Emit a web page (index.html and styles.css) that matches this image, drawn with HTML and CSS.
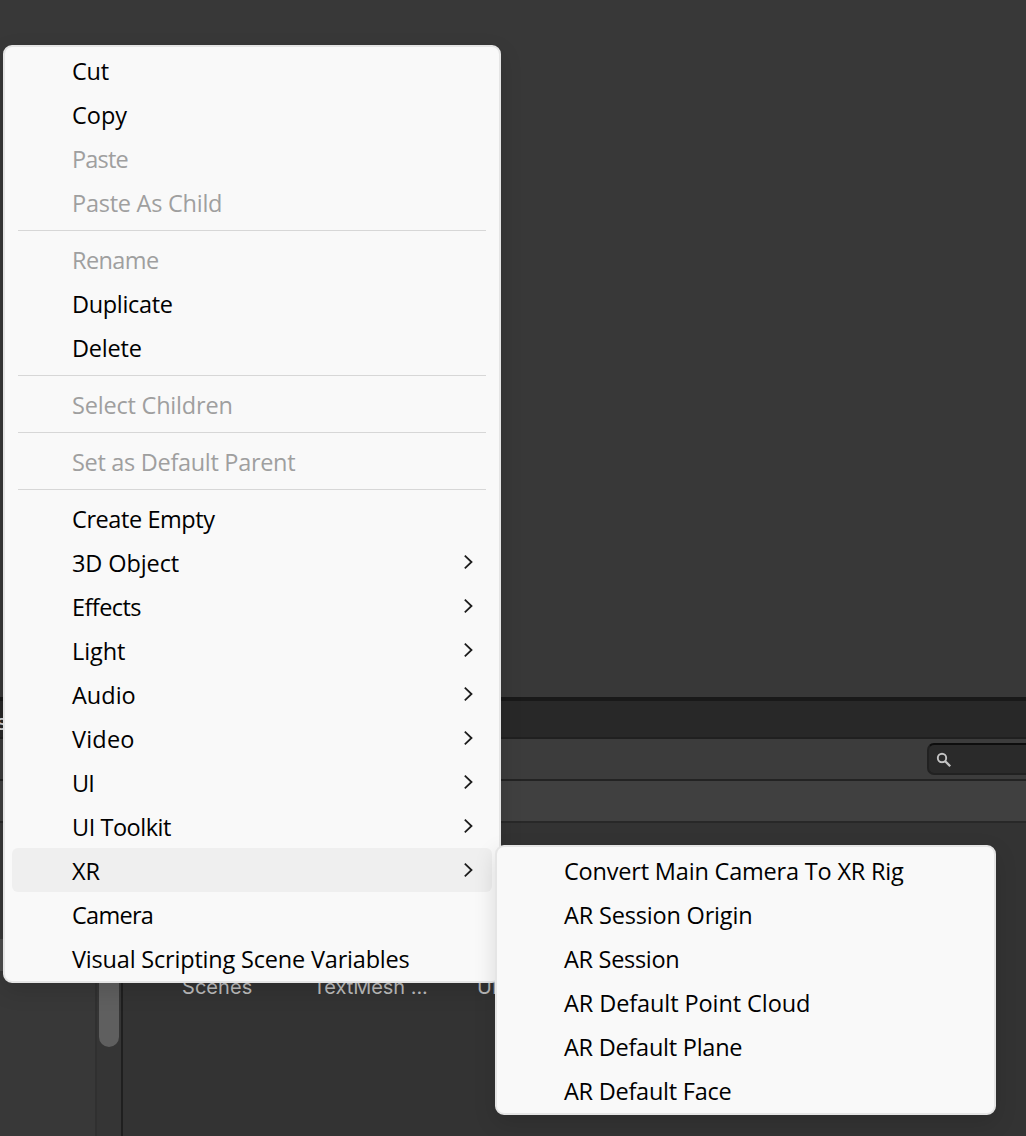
FILE: index.html
```html
<!DOCTYPE html>
<html lang="en">
<head>
<meta charset="utf-8">
<title>Editor</title>
<link rel="stylesheet" href="styles.css">
</head>
<body>
<svg class="defs"><symbol id="chev" viewBox="0 0 10 16"><path d="M.8 1.6 7.5 8 .8 14.4" fill="none" stroke="#1c1c1c" stroke-width="1.8"/></symbol></svg>
<div class="editor">
  <div class="scene"></div>
  <div class="tabs"><span class="tab-end">s</span></div>
  <div class="toolbar">
    <div class="search">
      <svg width="16" height="16" viewBox="0 0 16 16" fill="none" stroke="#c4c4c4"><circle cx="6" cy="6" r="4.2" stroke-width="1.9"/><path d="M9 9l5.2 5.2" stroke-width="2.3"/></svg>
    </div>
  </div>
  <div class="path"></div>
  <div class="browser">
    <div class="tree"><div class="selected"></div></div>
    <div class="scroll"><div class="thumb"></div></div>
    <div class="assets"><span class="a1">Scenes</span><span class="a2">TextMesh ...</span><span class="a3">UI</span></div>
  </div>
</div>

<div class="menu main">
  <div class="item"><span class="t1">Cut</span></div>
  <div class="item"><span class="t2">Copy</span></div>
  <div class="item off"><span class="t3">Paste</span></div>
  <div class="item off"><span class="t4">Paste As Child</span></div>
  <div class="sep"></div>
  <div class="item off"><span class="t5">Rename</span></div>
  <div class="item"><span class="t6">Duplicate</span></div>
  <div class="item"><span class="t7">Delete</span></div>
  <div class="sep"></div>
  <div class="item off"><span class="t8">Select Children</span></div>
  <div class="sep"></div>
  <div class="item off"><span class="t9">Set as Default Parent</span></div>
  <div class="sep"></div>
  <div class="item"><span class="t10">Create Empty</span></div>
  <div class="item"><span class="t11">3D Object</span><svg class="chev"><use href="#chev"/></svg></div>
  <div class="item"><span class="t12">Effects</span><svg class="chev"><use href="#chev"/></svg></div>
  <div class="item"><span class="t13">Light</span><svg class="chev"><use href="#chev"/></svg></div>
  <div class="item"><span class="t14">Audio</span><svg class="chev"><use href="#chev"/></svg></div>
  <div class="item"><span class="t15">Video</span><svg class="chev"><use href="#chev"/></svg></div>
  <div class="item"><span class="t16">UI</span><svg class="chev"><use href="#chev"/></svg></div>
  <div class="item"><span class="t17">UI Toolkit</span><svg class="chev"><use href="#chev"/></svg></div>
  <div class="item hover"><span class="t18">XR</span><svg class="chev"><use href="#chev"/></svg></div>
  <div class="item"><span class="t19">Camera</span></div>
  <div class="item"><span class="t20">Visual Scripting Scene Variables</span></div>
</div>

<div class="menu sub">
  <div class="item"><span class="s1">Convert Main Camera To XR Rig</span></div>
  <div class="item"><span class="s2">AR Session Origin</span></div>
  <div class="item"><span class="s3">AR Session</span></div>
  <div class="item"><span class="s4">AR Default Point Cloud</span></div>
  <div class="item"><span class="s5">AR Default Plane</span></div>
  <div class="item"><span class="s6">AR Default Face</span></div>
</div>
</body>
</html>
```
FILE: styles.css
```css
* { box-sizing: border-box; }
body { margin: 0; width: 1026px; height: 1136px; overflow: hidden; position: relative; background: #383838; font-family: "Open Sans", "Noto Sans", sans-serif; }
.defs { position: absolute; width: 0; height: 0; }

.editor { display: flex; flex-direction: column; height: 1136px; font-family: Inter, sans-serif; font-size: 20px; color: #bcbcbc; }
.scene { height: 697px; }
.tabs { height: 42px; background: #282828; border-top: 4px solid #191919; border-bottom: 2px solid #202020; }
.tab-end { display: block; width: 12px; margin-left: -4px; line-height: 42px; font-size: 22px; color: #d2d2d2; }
.toolbar { height: 42px; background: #3c3c3c; border-bottom: 2px solid #232323; display: flex; justify-content: flex-end; padding-top: 4px; }
.search { width: 99px; height: 32px; background: #2a2a2a; border: 2px solid #212121; border-top-color: #0d0d0d; border-right: 0; border-radius: 7px 0 0 7px; padding: 7px 0 0 7px; }
.search svg { display: block; }
.path { height: 42px; background: #404040; border-bottom: 2px solid #282828; }
.browser { flex: 1; display: flex; background: #333; }
.tree { width: 95px; background: #383838; padding-top: 116px; }
.selected { height: 32px; background: #4d4d4d; }
.scroll { width: 28px; background: #353535; border-left: 2px solid #303030; border-right: 2px solid #1f1f1f; padding-left: 2px; }
.thumb { width: 20px; height: 224px; background: #5f5f5f; border-radius: 0 0 10px 10px; }
.assets { flex: 1; display: flex; padding: 152px 0 0 59px; line-height: 24px; white-space: nowrap; }
.a1 { width: 131px; letter-spacing: 0.05px; }
.a2 { width: 164px; letter-spacing: -0.05px; }

.menu { position: absolute; background: #f9f9f9; border: 2px solid #e5e5e5; border-radius: 9px; padding: 1px 7px; box-shadow: 0 8px 22px rgba(0, 0, 0, 0.13); }
.main { left: 3px; top: 45px; width: 498px; height: 938px; }
.sub { left: 495px; top: 845px; width: 501px; height: 270px; }
.item { height: 44px; display: flex; justify-content: space-between; align-items: center; padding: 0 18px 0 60px; border-radius: 6px; font-size: 23.5px; line-height: 44px; color: #000; white-space: nowrap; }
.off { color: #9f9f9f; }
.hover { background: #efefef; }
.item span { padding-top: 2px; }
.chev { width: 10px; height: 16px; }
.sep { height: 1px; margin: 6px; background: #d7d7d7; }

/* per-label tracking */
.t1 { letter-spacing: -0.2px; }
.t3 { letter-spacing: -0.8px; }
.t4 { letter-spacing: -0.25px; }
.t5 { letter-spacing: -0.6px; }
.t6 { letter-spacing: -0.33px; }
.t7 { letter-spacing: -0.2px; }
.t8 { letter-spacing: -0.2px; }
.t9 { letter-spacing: -0.31px; }
.t10 { letter-spacing: -0.42px; }
.t11 { letter-spacing: -0.1px; }
.t12 { letter-spacing: -0.57px; }
.t13 { letter-spacing: -0.1px; }
.t15 { letter-spacing: 0.2px; }
.t16 { letter-spacing: -1px; }
.t17 { letter-spacing: -0.46px; }
.t19 { letter-spacing: -0.72px; }
.t20 { letter-spacing: -0.19px; }
.s1 { letter-spacing: -0.19px; }
.s2 { letter-spacing: -0.18px; }
.s3 { letter-spacing: -0.3px; }
.s4 { letter-spacing: -0.09px; }
.s5 { letter-spacing: -0.25px; }
.s6 { letter-spacing: -0.25px; }
```
